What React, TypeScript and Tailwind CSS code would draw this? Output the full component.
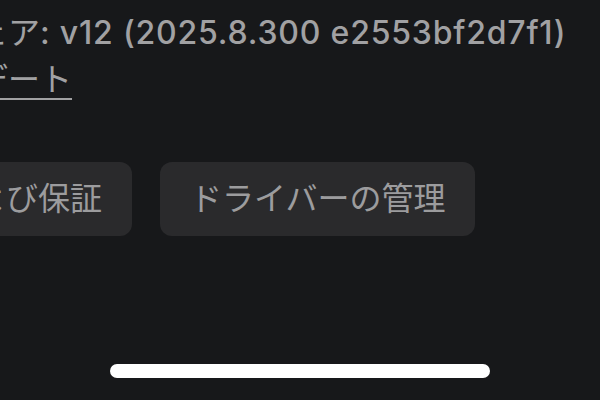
const font = {
  fontFamily: '"Inter", "Noto Sans CJK JP", sans-serif',
}

function ActionButton({ label }: { label: string }) {
  return (
    <button className="h-[74px] shrink-0 rounded-[12px] bg-[#2a2a2c] px-[30px] text-[32px] leading-none text-[#9c9c9e]">
      {label}
    </button>
  )
}

export default function App() {
  return (
    <div
      className="flex h-[400px] w-[600px] flex-col overflow-hidden bg-[#17181a]"
      style={font}
    >
      {/* software info, scrolled partly out of view on the left */}
      <div className="-ml-[152px] flex flex-col pt-[9px] text-[32px] leading-[47px] text-[#a1a1a3]">
        <div className="whitespace-nowrap">
          ソフトウェア
          <span className="font-medium tracking-[0.025em]">: v12 (2025.8.300 e2553bf2d7f1)</span>
        </div>
        <div className="whitespace-nowrap">
          <span className="underline decoration-[2px] underline-offset-[7px]">
            要アップデート
          </span>
        </div>

        <div className="mt-[59px] flex gap-[28px]">
          <ActionButton label="保守および保証" />
          <ActionButton label="ドライバーの管理" />
        </div>
      </div>

      <div className="flex-1" />
      <div className="mb-[22px] h-[14px] w-[380px] self-center rounded-full bg-white" />
    </div>
  )
}
